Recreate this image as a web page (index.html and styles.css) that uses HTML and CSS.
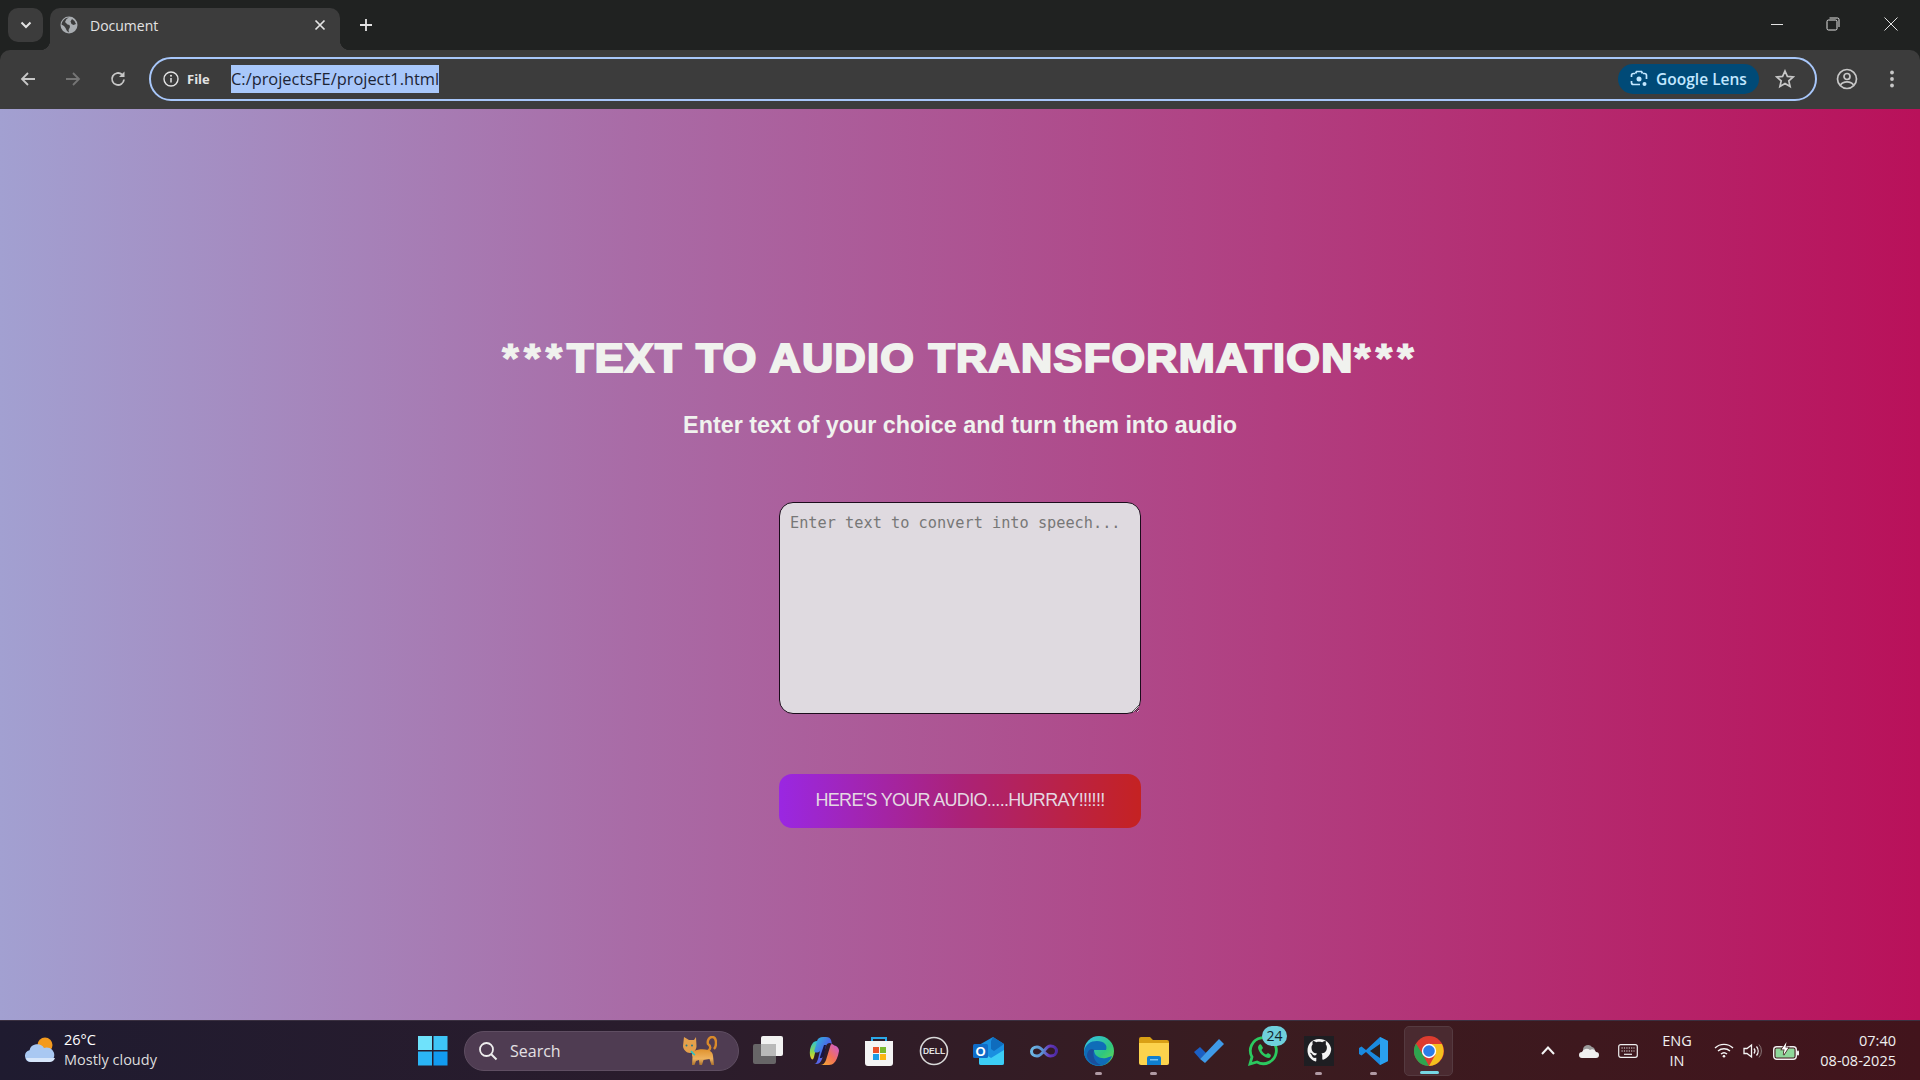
FILE: index.html
```html
<!DOCTYPE html>
<html lang="en">
<head>
<meta charset="utf-8">
<title>Document</title>
<link rel="stylesheet" href="styles.css">
</head>
<body>
<header class="chrome">
  <div class="tabstrip">
    <button class="tabsearch"><svg width="12" height="8" viewBox="0 0 12 8"><path d="M1.500 1.500 6 6l4.500-4.500" fill="none" stroke="#e3e3e3" stroke-width="2"/></svg></button>
    <div class="tab">
      <svg class="globe" width="18" height="18" viewBox="0 0 18 18"><circle cx="9" cy="9" r="8.500" fill="#a9adb1"/><path d="M9 1.500 6.500 3 5 6l2.500 2.500 2 .5.500 2-1.500 3 .5 2.500L7 15l-1.500-3L4 10 1.500 8.500C2 5 5 1.500 9 1.500ZM12 3l2.500 2L16 8l-2.500 1-2-1-1-2.500Z" fill="#3c3c3c"/></svg>
      <span class="tabtitle">Document</span>
      <svg width="12" height="12" viewBox="0 0 12 12"><path d="M1.500 1.500l9 9m0-9-9 9" stroke="#e3e3e3" stroke-width="1.700"/></svg>
    </div>
    <svg class="newtab" width="14" height="14" viewBox="0 0 14 14"><path d="M7 1v12M1 7h12" stroke="#e3e3e3" stroke-width="1.800"/></svg>
    <div class="winctrls">
      <svg width="14" height="14" viewBox="0 0 14 14"><path d="M1 7.500h12" stroke="#e3e3e3" stroke-width="1"/></svg>
      <svg width="14" height="14" viewBox="0 0 14 14"><rect x="1" y="3" width="10" height="10" rx="1.500" fill="none" stroke="#e3e3e3"/><path d="M3.500 1h8a1.500 1.500 0 0 1 1.500 1.500V10" fill="none" stroke="#e3e3e3"/></svg>
      <svg class="winclose" width="14" height="14" viewBox="0 0 14 14"><path d="M.5.500l13 13m0-13-13 13" stroke="#e3e3e3" stroke-width="1"/></svg>
    </div>
  </div>
  <div class="toolbar">
    <div class="navbtns">
      <svg width="18" height="18" viewBox="0 0 18 18"><path d="M16 9H3M9 3 3 9l6 6" fill="none" stroke="#c7c7c7" stroke-width="1.800"/></svg>
      <svg width="18" height="18" viewBox="0 0 18 18"><path d="M2 9h13M9 3l6 6-6 6" fill="none" stroke="#757575" stroke-width="1.800"/></svg>
      <svg width="18" height="18" viewBox="0 0 18 18"><path d="M15 9.500A6 6 0 1 1 13 4.500" fill="none" stroke="#c7c7c7" stroke-width="1.800"/><path d="M15.500 1.500v5.500H10" fill="#c7c7c7"/></svg>
    </div>
    <div class="omnibox">
      <svg width="16" height="16" viewBox="0 0 16 16"><circle cx="8" cy="8" r="7" fill="none" stroke="#e3e3e3" stroke-width="1.400"/><path d="M8 7v4.500" stroke="#e3e3e3" stroke-width="1.500"/><circle cx="8" cy="4.800" r="1" fill="#e3e3e3"/></svg>
      <span class="filelabel">File</span>
      <span class="url">C:/projectsFE/project1.html</span>
      <span class="lens">
        <svg width="18" height="18" viewBox="0 0 18 18"><path d="M5 3.500H3.500a2 2 0 0 0-2 2V7M1.500 11v1.500a2 2 0 0 0 2 2H10M13 3.500h1.500a2 2 0 0 1 2 2V9M5.500 3.500l1-2h5l1 2" fill="none" stroke="#c2e7ff" stroke-width="1.700"/><circle cx="9" cy="9" r="2.500" fill="#c2e7ff"/><circle cx="14.500" cy="14" r="2" fill="#c2e7ff"/></svg>
        Google Lens
      </span>
      <svg class="star" width="20" height="20" viewBox="0 0 20 20"><path d="M10 2l2.400 5.400 5.800.6-4.400 3.900 1.300 5.700-5.100-3-5.100 3 1.300-5.700L1.800 8l5.800-.6Z" fill="none" stroke="#c7c7c7" stroke-width="1.700"/></svg>
    </div>
    <div class="toolright">
      <svg width="22" height="22" viewBox="0 0 22 22"><circle cx="11" cy="11" r="9.500" fill="none" stroke="#c7c7c7" stroke-width="1.700"/><circle cx="11" cy="8.500" r="3" fill="none" stroke="#c7c7c7" stroke-width="1.700"/><path d="M4.500 17c1.500-2.500 4-3.200 6.500-3.200s5 .7 6.500 3.200" fill="none" stroke="#c7c7c7" stroke-width="1.700"/></svg>
      <svg width="6" height="18" viewBox="0 0 6 18"><circle cx="3" cy="2.500" r="1.900" fill="#c7c7c7"/><circle cx="3" cy="9" r="1.900" fill="#c7c7c7"/><circle cx="3" cy="15.500" r="1.900" fill="#c7c7c7"/></svg>
    </div>
  </div>
</header>
<main class="page">
  <h1 class="title"><span class="stars">***</span>TEXT TO AUDIO TRANSFORMATION<span class="stars">***</span></h1>
  <h2 class="subtitle">Enter text of your choice and turn them into audio</h2>
  <textarea class="input" placeholder="Enter text to convert into speech..."></textarea>
  <button class="speak">HERE'S YOUR AUDIO.....HURRAY!!!!!!</button>
</main>
<footer class="taskbar">
  <div class="weather">
    <svg width="32" height="26" viewBox="0 0 32 26"><circle cx="21" cy="8" r="7.500" fill="#f39a1e"/><path d="M7 25a6 6 0 0 1-1.500-11.800A8 8 0 0 1 20 11a6.500 6.500 0 0 1 5.500 14Z" fill="#a9c8f2"/><path d="M7 25a6 6 0 0 1-5-4h29a6 6 0 0 1-5.500 4Z" fill="#d7e6fa"/></svg>
    <div class="weathertext"><span class="temp">26°C</span><span class="cond">Mostly cloudy</span></div>
  </div>
  <div class="startslot">
    <svg width="30" height="30" viewBox="0 0 30 30"><rect width="14" height="14" fill="#6fe2fb"/><rect x="15.500" width="14" height="14" fill="#3ec5f7"/><rect y="15.500" width="14" height="14" fill="#2bb5f6"/><rect x="15.500" y="15.500" width="14" height="14" fill="#129bf0"/></svg>
  </div>
  <div class="search">
    <svg width="20" height="20" viewBox="0 0 20 20"><circle cx="8.500" cy="8.500" r="6.500" fill="none" stroke="#eee" stroke-width="1.800"/><path d="m13 13 5.500 5.500" stroke="#eee" stroke-width="2"/></svg>
    <span class="searchtext">Search</span>
    <svg class="cat" width="34" height="30" viewBox="0 0 34 30"><defs><linearGradient id="catfur" x1="0" y1="0" x2="0" y2="1"><stop offset="0" stop-color="#e0932f"/><stop offset=".6" stop-color="#eeb25e"/><stop offset="1" stop-color="#a86f2c"/></linearGradient></defs><path d="M25 15c3-2 3-5 0-7-1-3 1-7 4-7 3 0 4 3 4 6 0 3-1 5-2 6" fill="none" stroke="#d98a2b" stroke-width="2.400"/><path d="M11 15c4-2 10-2 14-1 3 1 5 3 5 6l1 9h-2.500l-2-6-6 1-1.500 5h-2.500l-.5-5-3 1-1.500 4H9l.5-8c-1-2-.5-4 1.500-6Z" fill="url(#catfur)"/><path d="M1 1l5 3h5l2-3 .5 9c0 4-3 7-6.500 7S0 13.500 0 10Z" fill="#e4a04c"/><circle cx="3.500" cy="9.500" r="1" fill="#247a8a"/><circle cx="9" cy="9.500" r="1" fill="#247a8a"/><path d="M8 15c1.500 2 3 3.500 4 4" fill="none" stroke="#2cc4c4" stroke-width="1.800"/></svg>
  </div>
  <div class="apps">
    <div class="app"><svg width="31" height="30" viewBox="0 0 31 30"><rect x="8" y="0" width="22" height="20" rx="2" fill="#f2f2f2"/><rect x="0" y="8" width="23" height="20" rx="2" fill="#6e6e6e" fill-opacity=".9"/><rect x="8" y="8" width="15" height="12" fill="#b9b9b9"/></svg></div>
    <div class="app"><svg width="30" height="28" viewBox="0 0 30 28"><defs><linearGradient id="cpa" x1="0" y1="0" x2="1" y2="1"><stop offset="0" stop-color="#2cc0d8"/><stop offset=".5" stop-color="#4a6be8"/><stop offset="1" stop-color="#a04be0"/></linearGradient><linearGradient id="cpb" x1="0" y1="1" x2="1" y2="0"><stop offset="0" stop-color="#f5b02c"/><stop offset=".5" stop-color="#f2705a"/><stop offset="1" stop-color="#c85ae0"/></linearGradient><linearGradient id="cpc" x1="0" y1="0" x2="0" y2="1"><stop offset="0" stop-color="#2cc0d8"/><stop offset=".6" stop-color="#8ed84a"/><stop offset="1" stop-color="#f5d02c"/></linearGradient></defs><path d="M1 13C2 8 4 4 8 4h4c-3 1-4 4-5 8l-2 8c-.5 2-1.500 3-2.500 2-1.500-2-2-5-1.500-9Z" fill="url(#cpc)"/><path d="M8 4c1-3 3-4 6-4h3c3 0 4 1 5 3l1 4c-2-2-5-1-6 2l-4 13c-1 3-3 5-6 5H5c2 0 3-2 4-5l2-8c-2 2-5 2-6 0l2-6Z" fill="url(#cpa)"/><path d="M23 7c2 1 3 2 4 2 2 1 3 3 3 5-1 6-3 10-5 12-1 1-3 2-5 2h-9c3 0 5-2 6-5l4-13c.5-2 1-3 2-3Z" fill="url(#cpb)"/><path d="M17 8h-2l-4 12c-1 2 3 1 4-1Z" fill="#1a1440"/></svg></div>
    <div class="app"><svg width="30" height="30" viewBox="0 0 30 30"><path d="M8 5V2h14v3" fill="none" stroke="#2aa8e8" stroke-width="2"/><path d="M1 5h28v22a3 3 0 0 1-3 3H4a3 3 0 0 1-3-3Z" fill="#f4f4f4"/><rect x="9" y="11" width="6" height="6" fill="#e8502a"/><rect x="16" y="11" width="6" height="6" fill="#7ab82c"/><rect x="9" y="18" width="6" height="6" fill="#1a9ce8"/><rect x="16" y="18" width="6" height="6" fill="#fbb614"/></svg></div>
    <div class="app"><svg width="30" height="30" viewBox="0 0 30 30"><circle cx="15" cy="15" r="13.500" fill="none" stroke="#d8d8d8" stroke-width="1.600"/><text x="15" y="18" class="dell">DELL</text></svg></div>
    <div class="app"><svg width="31" height="28" viewBox="0 0 31 28"><path d="M6 8 20 0l11 7v19a2 2 0 0 1-2 2H8a2 2 0 0 1-2-2Z" fill="#1a8fe0"/><path d="M6 13l12 8 13-8v13a2 2 0 0 1-2 2H8a2 2 0 0 1-2-2Z" fill="#3ccdf5"/><path d="M20 0l11 7-10 7-3-2V4Z" fill="#0f6cbd"/><rect y="7" width="15" height="14" rx="1.500" fill="#0f6cc8"/><text x="7.500" y="18.500" class="outlook">O</text></svg></div>
    <div class="app"><svg width="30" height="16" viewBox="0 0 30 16"><defs><linearGradient id="inf" x1="0" y1="0" x2="1" y2="0"><stop offset="0" stop-color="#6db8e4"/><stop offset=".45" stop-color="#5a8ed0"/><stop offset=".7" stop-color="#6a3ac0"/><stop offset="1" stop-color="#4a2aa0"/></linearGradient></defs><path d="M8 4C4.500 4 2.500 6 2.500 8.500S4.500 13 8 13c6 0 8-10 13.500-10C25.500 3 27.500 5.500 27.500 8s-2 5-6 5C16 13 14 4 8 4Z" fill="none" stroke="url(#inf)" stroke-width="3"/></svg></div>
    <div class="app running"><svg width="30" height="30" viewBox="0 0 30 30"><defs><linearGradient id="edg" x1="0" y1="0" x2="1" y2="1"><stop offset="0" stop-color="#35c1f1"/><stop offset=".6" stop-color="#2fc67f"/><stop offset="1" stop-color="#6fdc4a"/></linearGradient></defs><circle cx="15" cy="15" r="15" fill="url(#edg)"/><path d="M0 16C1 8 7 5 13 5c7 0 11 4 9 9H10c0 6 6 9 12 8l6-2c-2 6-7 10-13 10C7 30 0 24 0 16Z" fill="#0f6cb8"/><path d="M10 14c-2 6 1 13 7 15-8 1-13-4-14-9 0-5 4-9 7-6Z" fill="#1a4f9c"/></svg></div>
    <div class="app running"><svg width="30" height="28" viewBox="0 0 30 28"><path d="M0 2a2 2 0 0 1 2-2h9l3 3h14a2 2 0 0 1 2 2v4H0Z" fill="#d9a015"/><path d="M0 6h30v20a2 2 0 0 1-2 2H2a2 2 0 0 1-2-2Z" fill="#fcd34d"/><path d="M8 21a2 2 0 0 1 2-2h10a2 2 0 0 1 2 2v7H8Z" fill="#0f7fd0"/><rect x="11" y="22" width="8" height="1.500" fill="#7ac4f0"/></svg></div>
    <div class="app"><svg width="30" height="24" viewBox="0 0 30 24"><path d="M0 13 6 8l6 6-6 6Z" fill="#1b5fc4"/><path d="M6 20 25 0l5 5-19 19Z" fill="#3f9ae8"/></svg></div>
    <div class="app"><svg width="32" height="32" viewBox="0 0 32 32"><path d="M2 29l2-7a13 13 0 1 1 5 5Z" fill="none" stroke="#2bc95f" stroke-width="2.800"/><path d="M11 10c1-1 2-1 3 1l1 2-1.500 2c1 2 2.500 3.500 4.500 4.500l2-1.500 2.500 1.500c1 1 0 3-1.500 3.500-5 0-11-6-11-11Z" fill="#2bc95f"/></svg><span class="badge">24</span></div>
    <div class="app running"><svg width="30" height="30" viewBox="0 0 30 30"><rect width="30" height="30" fill="#1e1e22"/><path d="M15 3C8 3 3.500 8 3.500 14.500c0 5 3 9 8 11 .6 0 .8-.3.8-.7v-3c-3 .6-4-1-4.500-2.300-.2-.6-.8-1.700-1.400-2-.5-.3-1-.8 0-.8 1 0 1.800 1 2 1.400 1.100 1.900 3 1.300 3.800 1 .1-.8.4-1.400.8-1.700-3-.3-5.500-1.400-5.500-6 0-1.300.5-2.400 1.200-3.200-.1-.3-.5-1.600.1-3.200 0 0 1-.3 3.400 1.200 1-.3 2-.4 3-.4s2 .1 3 .4c2.400-1.500 3.400-1.200 3.400-1.200.6 1.600.2 2.900.1 3.200.7.800 1.200 1.900 1.200 3.200 0 4.600-2.800 5.700-5.500 6 .5.400.9 1.100.9 2.300v3.400c0 .4.300.8.900.7 4.800-1.700 8-6 8-11C26.500 8 22 3 15 3Z" fill="#f4f4f4"/></svg></div>
    <div class="app running"><svg width="30" height="30" viewBox="0 0 30 30"><path d="M21 1 29 5v20l-8 4L7 16l-4.500 3.500L0 18V12l2.500-1.500L7 14Z" fill="#1a8ae0"/><path d="M21 8v14L11 15Z" fill="#2b2020"/><path d="M21 1l8 4v20l-8 4Z" fill="#2aa0ee"/></svg></div>
    <div class="app active"><svg width="30" height="30" viewBox="0 0 30 30"><circle cx="15" cy="15" r="15" fill="#dd3c2f"/><path d="M15 30A15 15 0 0 1 2 7.500L9 19l6 11Z" fill="#2ea44f"/><path d="M15 8h12.900A15 15 0 0 1 15 30l6.500-11.500Z" fill="#f4c01e"/><circle cx="15" cy="15" r="7.200" fill="#fff"/><circle cx="15" cy="15" r="5.800" fill="#2b7de9"/></svg></div>
  </div>
  <div class="tray">
    <svg class="chev" width="14" height="9" viewBox="0 0 14 9"><path d="M1 8l6-6.500L13 8" fill="none" stroke="#f4f4f4" stroke-width="2"/></svg>
    <svg class="onedrive" width="20" height="14" viewBox="0 0 20 14"><path d="M4 6a5 5 0 0 1 9-3 4 4 0 0 1 3 4H5Z" fill="#9a9a9a"/><path d="M3 14a3 3 0 0 1 0-6 5 5 0 0 1 8-2 4 4 0 0 1 6 2 3 3 0 0 1 0 6Z" fill="#f0f0f0"/></svg>
    <svg class="kbd" width="20" height="14" viewBox="0 0 20 14"><rect x=".7" y=".7" width="18.600" height="12.600" rx="2" fill="none" stroke="#eee" stroke-width="1.200"/><path d="M3.500 4h13M3.500 7h13" stroke="#eee" stroke-width="1.200" stroke-dasharray="1.200 1.200"/><path d="M6 10.300h8" stroke="#eee" stroke-width="1.200"/></svg>
    <div class="lang"><span>ENG</span><span>IN</span></div>
    <svg class="wifi" width="20" height="15" viewBox="0 0 20 15"><path d="M1 5a13 13 0 0 1 18 0M4 8a9 9 0 0 1 12 0M7 11a4.500 4.500 0 0 1 6 0" fill="none" stroke="#f4f4f4" stroke-width="1.400"/><circle cx="10" cy="13.300" r="1.300" fill="#f4f4f4"/></svg>
    <svg class="vol" width="20" height="16" viewBox="0 0 20 16"><path d="M1 5.500h3L8.500 2v12L4 10.500H1Z" fill="none" stroke="#f4f4f4" stroke-width="1.300"/><path d="M11 5.500a4 4 0 0 1 0 5M13.500 3.500a7 7 0 0 1 0 9" fill="none" stroke="#f4f4f4" stroke-width="1.300"/><path d="M16 1.500a10 10 0 0 1 0 13" fill="none" stroke="#8a7a7a" stroke-width="1"/></svg>
    <svg class="batt" width="26" height="18" viewBox="0 0 26 18"><rect x=".7" y="4.700" width="22.600" height="12.600" rx="3" fill="none" stroke="#f0f0f0" stroke-width="1.400"/><rect x="2.500" y="6.500" width="19" height="9" rx="1" fill="#8ed89a"/><rect x="24" y="8.500" width="2" height="5" rx="1" fill="#f0f0f0"/><path d="M13.500 0 8.500 7.500h3L10.500 13l5-7.500h-3Z" fill="#fff" stroke="#3a1518" stroke-width="1.400" paint-order="stroke"/></svg>
    <div class="clock"><span>07:40</span><span>08-08-2025</span></div>
  </div>
</footer>
</body>
</html>
```

FILE: styles.css
```css
* { box-sizing: border-box; }
html, body { margin: 0; height: 100%; overflow: hidden; }
body {
  display: flex;
  flex-direction: column;
  height: 1080px;
  font-family: "Open Sans", "Noto Sans", sans-serif;
  background: #202221;
}
svg { display: block; flex: none; }

.chrome { flex: none; height: 109px; background: #202221; }
.tabstrip { height: 50px; display: flex; align-items: flex-start; padding: 8px 0 0 8px; }
.tabsearch { width: 35px; height: 34px; margin: 0; padding: 0; border: 0; border-radius: 10px; background: #3c3c3c; display: flex; align-items: center; justify-content: center; }
.tab { width: 290px; height: 42px; margin-left: 7px; padding: 0 14px 8px 10px; background: #3c3c3c; border-radius: 10px 10px 0 0; display: flex; align-items: center; color: #e3e3e3; font-size: 14px; position: relative; }
.tab::before, .tab::after { content: ""; position: absolute; bottom: 0; width: 10px; height: 10px; }
.tab::before { left: -10px; background: radial-gradient(circle at 0 0, transparent 10px, #3c3c3c 10.500px); }
.tab::after { right: -10px; background: radial-gradient(circle at 100% 0, transparent 10px, #3c3c3c 10.500px); }
.tab .globe { margin-right: 12px; }
.tabtitle { flex: 1; }
.newtab { margin: 10px 0 0 19px; }
.winctrls { margin-left: auto; padding: 9px 22px 0 0; display: flex; gap: 42px; }
.winclose { margin-left: 2px; }

.toolbar { height: 59px; background: #3c3c3c; border-radius: 10px 10px 0 0; display: flex; align-items: center; padding: 0 0 1px 0; }
.navbtns { width: 149px; padding-left: 19px; display: flex; gap: 27px; flex: none; }
.omnibox { flex: 1; height: 44px; border: 2px solid #a8c7fa; border-radius: 22px; background: #3c3c3c; display: flex; align-items: center; padding-left: 12px; }
.filelabel { margin-left: 8px; font-size: 13px; font-weight: 700; color: #e3e3e3; width: 44px; }
.url { background: #a8c7fa; color: #1c2434; font-size: 16.400px; line-height: 28px; height: 28px; padding: 0; }
.lens { margin-left: auto; height: 30px; width: 141px; border-radius: 15px; background: #004a77; color: #c2e7ff; font-size: 15.500px; font-weight: 600; display: flex; align-items: center; justify-content: center; gap: 8px; }
.star { margin: 0 20px 0 16px; }
.toolright { width: 103px; flex: none; display: flex; align-items: center; padding-left: 19px; gap: 31px; }

.page {
  flex: 1;
  min-height: 0;
  display: flex;
  flex-direction: column;
  align-items: center;
  padding-top: 226px;
  background: linear-gradient(90deg, #a2a0d1 0%, #a96ba6 33%, #b9115a 100%);
}
.title { margin: 0; font-family: "Liberation Sans", Arial, sans-serif; font-size: 40px; line-height: 46px; font-weight: 700; color: #f0f2ee; -webkit-text-stroke: 2px #f0f2ee; letter-spacing: 1.200px; transform: scaleX(1.080); white-space: nowrap; }
.stars { letter-spacing: 4.500px; -webkit-text-stroke: 1px #f0f2ee; }
.subtitle { margin: 30px 0 0; font-family: "Liberation Sans", Arial, sans-serif; font-size: 23.350px; line-height: 28px; font-weight: 700; color: #f0f2ee; }
.input { display: block; width: 362px; height: 212px; margin-top: 63px; padding: 11px 10px; border: 1.500px solid #1c0c1c; border-radius: 14px; background: #dfdae0; font-family: "DejaVu Sans Mono", monospace; font-size: 15.250px; outline: 0; }
.input::placeholder { color: #777; }
.speak { width: 362px; height: 54px; margin-top: 60px; padding: 0 0 2px; border: 0; border-radius: 13px; background: linear-gradient(90deg, #9a27e2, #ab2278 50%, #c52222); color: #e4d8e2; font-family: "Liberation Sans", Arial, sans-serif; font-size: 18px; letter-spacing: -.700px; }

.taskbar { flex: none; height: 60px; display: flex; align-items: center; border-top: 1px solid #3a3040; background: linear-gradient(90deg, #1f1b30 0%, #2a1c2c 35%, #3a1c20 65%, #42141c 100%); color: #f0f0f0; }
.weather { width: 402px; flex: none; display: flex; align-items: center; padding-left: 24px; gap: 8px; margin-top: -2px; }
.weathertext { display: flex; flex-direction: column; font-size: 14.500px; line-height: 20px; }
.temp { color: #fff; }
.cond { color: #ddd; }
.startslot { width: 62px; flex: none; display: flex; justify-content: center; }
.search { width: 275px; height: 40px; flex: none; border-radius: 20px; background: #4f3c52; border: 1px solid #5f4e62; display: flex; align-items: center; padding-left: 13px; }
.searchtext { margin-left: 12px; font-size: 16px; color: #e4e0e4; flex: 1; }
.cat { margin-right: 21px; }
.dell { font-family: "Liberation Sans", Arial, sans-serif; font-size: 8.500px; font-weight: 700; fill: #e0e0e0; text-anchor: middle; }
.outlook { font-family: "Liberation Sans", Arial, sans-serif; font-size: 13px; font-weight: 700; fill: #fff; text-anchor: middle; }
.apps { display: flex; flex: none; margin-left: 2px; }
.app { width: 55px; height: 50px; display: flex; align-items: center; justify-content: center; position: relative; }
.running::after { content: ""; position: absolute; bottom: 1px; left: 24px; width: 7px; height: 3px; border-radius: 2px; background: #b09aa4; }
.active { width: 49px; margin-left: 3px; background: #4a2a30; border: 1px solid #553a40; border-radius: 5px; }
.active::after { content: ""; position: absolute; bottom: 1px; left: 15px; width: 19px; height: 3px; border-radius: 2px; background: #76d6e4; }
.badge { position: absolute; top: 0; left: 26px; width: 25px; height: 20px; border-radius: 10px; background: #6fd0dc; color: #10222a; font-size: 14px; line-height: 20px; text-align: center; }
.tray { flex: 1; display: flex; align-items: center; padding-left: 88px; }
.chev { margin-right: 24px; }
.onedrive { margin-right: 19px; }
.kbd { margin-right: 11px; }
.lang { width: 56px; display: flex; flex-direction: column; align-items: center; font-size: 14.500px; line-height: 20px; }
.wifi { margin: 0 9px 0 9px; }
.vol { margin-right: 10px; }
.clock { margin-left: auto; padding-right: 24px; display: flex; flex-direction: column; align-items: flex-end; font-size: 14.500px; line-height: 20px; }
```
